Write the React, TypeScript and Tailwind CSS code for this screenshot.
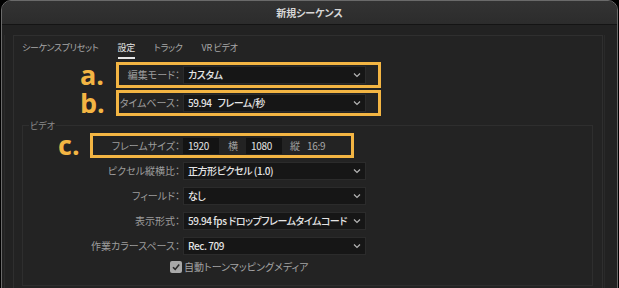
import React from "react";

const jp = "font-['Noto_Sans_CJK_JP','Noto_Sans',sans-serif] [font-feature-settings:'palt']";

function Chevron() {
  return (
    <svg width="8" height="6" viewBox="0 0 8 6" className="shrink-0">
      <path d="M1 1.5 L4 4.5 L7 1.5" fill="none" stroke="#b5b5b5" strokeWidth="1.2" />
    </svg>
  );
}

function Select({ value }: { value: React.ReactNode }) {
  return (
    <div className="w-[183px] h-[18px] bg-[#161616] border border-[#2b2b2b] flex items-center justify-between pl-[4px] pr-[4px]">
      <span className="text-[10px] leading-[12px] tracking-[-0.45px] text-[#e4e4e4] font-medium whitespace-nowrap">{value}</span>
      <Chevron />
    </div>
  );
}

function Label({ text, w }: { text: string; w: string }) {
  return (
    <div className={`${w} text-right pr-[2px] text-[10px] leading-[12px] text-[#9d9d9d] whitespace-nowrap`}>{text}</div>
  );
}

function Annot({ letter, left, top }: { letter: string; left: string; top: string }) {
  return (
    <span
      className={`absolute ${left} ${top} font-['Open_Sans',sans-serif] font-bold text-[27px] leading-[20px] text-[#f3b543]`}
    >
      {letter}
    </span>
  );
}

export default function App() {
  return (
    <div className={`w-[619px] h-[288px] bg-black overflow-hidden ${jp}`}>
      <div className="ml-[1px] w-[617px] h-[300px] border border-[#6a6a6a] rounded-t-[10px] bg-[#222222] overflow-hidden flex flex-col">
        {/* Title bar */}
        <div className="h-[24px] shrink-0 bg-gradient-to-b from-[#333333] to-[#2c2c2c] border-b border-[#141414] flex items-center justify-center">
          <span className="text-[10px] leading-[12px] font-bold text-[#d6d6d6]">新規シーケンス</span>
        </div>
        {/* Body */}
        <div className="flex-1 pl-[2px] pr-[12px] pt-[10px]">
          <div className="h-full border-l border-r border-[#2a2a2a] pl-[8px] pr-[1px]">
            <div className="h-full border border-[#2f2f2f] bg-[#232323] flex flex-col">
              {/* Tabs */}
              <div className="h-[23px] flex items-stretch gap-[19px] pl-[8px] text-[9px] leading-[12px] tracking-[-0.3px]">
                <div className="flex flex-col justify-between pt-[6px]">
                  <span className="text-[#a8a8a8]">シーケンスプリセット</span>
                  <span className="h-[2px]" />
                </div>
                <div className="flex flex-col justify-between pt-[6px]">
                  <span className="text-[#e6e6e6]">設定</span>
                  <span className="h-[2px] bg-[#e6e6e6]" />
                </div>
                <div className="flex flex-col justify-between pt-[6px]">
                  <span className="text-[#a8a8a8]">トラック</span>
                  <span className="h-[2px]" />
                </div>
                <div className="flex flex-col justify-between pt-[6px]">
                  <span className="text-[#a8a8a8]">VR ビデオ</span>
                  <span className="h-[2px]" />
                </div>
              </div>

              {/* Row a */}
              <div className="relative mt-[3px] h-[26px] flex items-center gap-[1px]">
                <Label text="編集モード：" w="w-[168px]" />
                <Select value="カスタム" />
                <div className="absolute left-[102px] top-0 w-[265px] h-[26px] border-[3px] border-[#f3b543]" />
                <Annot letter="a." left="left-[66px]" top="top-[3px]" />
              </div>
              {/* Row b */}
              <div className="relative mt-[2px] h-[26px] flex items-center gap-[1px]">
                <Label text="タイムベース：" w="w-[168px]" />
                <Select
                  value={
                    <>
                      <span>59.94</span>
                      <span className="ml-[6px]">フレーム/秒</span>
                    </>
                  }
                />
                <div className="absolute left-[102px] top-0 w-[265px] h-[26px] border-[3px] border-[#f3b543]" />
                <Annot letter="b." left="left-[66px]" top="top-[3px]" />
              </div>

              {/* Video group */}
              <div className="relative mt-[9px] ml-[8px] mr-[9px] border border-[#2e2e2e] pt-[7px] pb-[10px]">
                <span className="absolute left-[6px] top-[-6px] px-[1px] bg-[#232323] text-[9px] leading-[11px] text-[#8c8c8c]">ビデオ</span>

                {/* Row c */}
                <div className="relative h-[25px] flex items-center gap-[1px]">
                  <Label text="フレームサイズ：" w="w-[159px]" />
                  <div className="flex items-center text-[10px] leading-[12px]">
                    <div className="w-[36px] h-[16px] bg-[#131313] pl-[5px] flex items-center text-[#e4e4e4] tracking-[-0.3px]">1920</div>
                    <span className="ml-[9px] text-[#9d9d9d]">横</span>
                    <div className="ml-[8px] w-[36px] h-[16px] bg-[#131313] pl-[5px] flex items-center text-[#e4e4e4] tracking-[-0.3px]">1080</div>
                    <span className="ml-[8px] text-[#9d9d9d]">縦</span>
                    <span className="ml-[7px] text-[#a8a8a8] tracking-[-0.3px]">16:9</span>
                  </div>
                  <div className="absolute left-[67px] top-0 w-[264px] h-[25px] border-[3px] border-[#f3b543]" />
                  <Annot letter="c." left="left-[35px]" top="top-[2px]" />
                </div>

                <div className="h-[25px] flex items-center gap-[1px]">
                  <Label text="ピクセル縦横比：" w="w-[159px]" />
                  <Select value="正方形ピクセル (1.0)" />
                </div>
                <div className="h-[25px] flex items-center gap-[1px]">
                  <Label text="フィールド：" w="w-[159px]" />
                  <Select value="なし" />
                </div>
                <div className="h-[25px] flex items-center gap-[1px]">
                  <Label text="表示形式：" w="w-[159px]" />
                  <Select value="59.94 fps ドロップフレームタイムコード" />
                </div>
                <div className="h-[25px] flex items-center gap-[1px]">
                  <Label text="作業カラースペース：" w="w-[159px]" />
                  <Select value="Rec. 709" />
                </div>
                <div className="h-[17px] flex items-center pl-[147px]">
                  <div className="w-[12px] h-[12px] rounded-[2px] bg-[#a9a9a9] flex items-center justify-center">
                    <svg width="10" height="10" viewBox="0 0 10 10">
                      <path d="M2 5.2 L4.2 7.4 L8.2 2.6" fill="none" stroke="#2a2a2a" strokeWidth="1.6" />
                    </svg>
                  </div>
                  <span className="ml-[2px] text-[10px] leading-[12px] text-[#a3a3a3]">自動トーンマッピングメディア</span>
                </div>
              </div>
            </div>
          </div>
        </div>
      </div>
    </div>
  );
}
